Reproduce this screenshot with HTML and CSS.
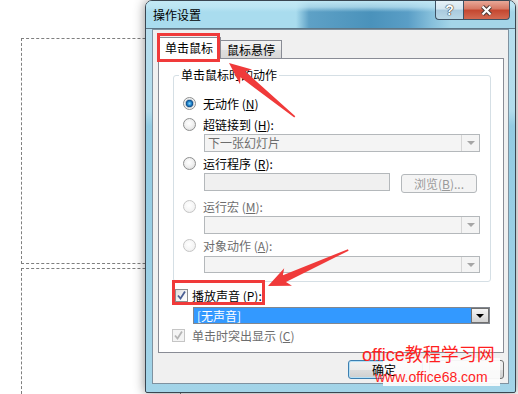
FILE: index.html
```html
<!DOCTYPE html>
<html lang="zh-CN">
<head>
    <meta charset="UTF-8">
    <meta name="viewport" content="width=device-width, initial-scale=1.0">
    <title>操作设置</title>
    <link rel="stylesheet" href="styles.css">
</head>
<body>
    <div class="slide slide-top"></div>
    <div class="slide slide-bottom"></div>

    <div class="window">
        <div class="titlebar">
            <span class="title">操作设置</span>
            <div class="caption">
                <div class="cap-btn cap-help">?</div>
                <div class="cap-btn cap-close">
                    <svg width="13" height="11" viewBox="0 0 13 11">
                        <path d="M2.5 1.5 L10.5 9.5 M10.5 1.5 L2.5 9.5" stroke="#4a3a36" stroke-width="4.2" fill="none"/>
                        <path d="M2.5 1.5 L10.5 9.5 M10.5 1.5 L2.5 9.5" stroke="#fff" stroke-width="2.2" fill="none"/>
                    </svg>
                </div>
            </div>
        </div>

        <div class="client">
            <div class="tabs">
                <div class="tab tab-active">单击鼠标</div>
                <div class="tab">鼠标悬停</div>
            </div>
            <div class="panel">
                <fieldset class="group">
                    <legend>单击鼠标时的动作</legend>
                    <div class="opt"><span class="radio radio-on"></span>无动作 (<u>N</u>)</div>
                    <div class="opt gap1"><span class="radio"></span>超链接到 (<u>H</u>):</div>
                    <div class="combo"><span class="combo-text">下一张幻灯片</span><span class="combo-btn"></span></div>
                    <div class="opt gap1"><span class="radio"></span>运行程序 (<u>R</u>):</div>
                    <div class="field-row">
                        <div class="textbox"></div>
                        <div class="btn btn-off">浏览(<u>B</u>)...</div>
                    </div>
                    <div class="opt opt-off gap4"><span class="radio radio-off"></span>运行宏 (<u>M</u>):</div>
                    <div class="combo"><span class="combo-text"></span><span class="combo-btn"></span></div>
                    <div class="opt opt-off gap1"><span class="radio radio-off"></span>对象动作 (<u>A</u>):</div>
                    <div class="combo combo-last"><span class="combo-text"></span><span class="combo-btn"></span></div>
                </fieldset>

                <div class="check-row sound-row">
                    <span class="check">
                        <svg width="11" height="11" viewBox="0 0 11 11"><path d="M2 5.5 L4.5 8.5 L9 1.5" stroke="#4b5f93" stroke-width="1.8" fill="none"/></svg>
                    </span>
                    播放声音 (<u>P</u>):
                </div>
                <div class="combo combo-sound"><span class="combo-text">[无声音]</span><span class="combo-btn"></span></div>
                <div class="check-row check-row-off">
                    <span class="check check-off">
                        <svg width="11" height="11" viewBox="0 0 11 11"><path d="M2 5.5 L4.5 8.5 L9 1.5" stroke="#b5b5b5" stroke-width="1.8" fill="none"/></svg>
                    </span>
                    单击时突出显示 (<u>C</u>)
                </div>
            </div>
            <div class="actions">
                <div class="btn btn-default"><span class="btn-label">确定</span></div>
                <div class="btn"></div>
            </div>
        </div>
    </div>

    <!-- annotations drawn over the screenshot -->
    <div class="mark mark-tab"></div>
    <div class="mark mark-sound"></div>
    <svg class="arrows" width="518" height="394" viewBox="0 0 518 394">
        <polygon transform="translate(229 63) rotate(219.3)" points="-85,-0.8 -18,-3.8 -22,-9.5 0,0 -22,9.5 -18,3.8 -85,0.8" fill="#f03a3a"/>
        <polygon transform="translate(268 286) rotate(155.8)" points="-88,-0.8 -18,-3.8 -22,-9.5 0,0 -22,9.5 -18,3.8 -88,0.8" fill="#f03a3a"/>
    </svg>

    <div class="wm-backdrop"></div>
    <div class="wm wm-name">office教程学习网</div>
    <div class="wm wm-url">www.office68.com</div>
</body>
</html>
```

FILE: styles.css
```css
* {
    box-sizing: border-box;
}

body {
    margin: 0;
    width: 518px;
    height: 394px;
    overflow: hidden;
    position: relative;
    background: #fff;
    font-family: "Noto Sans CJK SC", "Liberation Sans", sans-serif;
    font-size: 12px;
    color: #000;
}

u {
    text-decoration-thickness: 1px;
    text-underline-offset: 1px;
}

/* slide placeholders behind the dialog */
.slide {
    position: absolute;
    left: 21px;
    width: 160px;
    border: 1px dashed #7f7f7f;
}
.slide-top {
    top: 38px;
    height: 226px;
}
.slide-bottom {
    top: 268px;
    height: 126px;
    border-bottom: none;
}

/* dialog window */
.window {
    position: absolute;
    left: 145px;
    top: 0;
    width: 371px;
    height: 393px;
    display: flex;
    flex-direction: column;
    border: 1px solid #3a4651;
    border-radius: 7px 7px 2px 2px;
    background: linear-gradient(to bottom, #b9dfee 0, #b2dcec 110px, #93cbe2 125px, #a3d4e8 100%);
    box-shadow: 0 0 12px rgba(0, 0, 0, 0.45);
}

.titlebar {
    height: 28px;
    display: flex;
    align-items: flex-start;
    padding-left: 7px;
    border-radius: 6px 6px 0 0;
    background:
        linear-gradient(to bottom, rgba(196, 233, 245, 0.95) 0, rgba(196, 233, 245, 0.7) 6px, rgba(196, 233, 245, 0) 11px),
        linear-gradient(to right, #a9dcee 0, #a9dcee 150px, #5ea1c6 163px, #4a92bb 225px, #5a9ec6 262px, #85bfdb 285px, #a4d5e8 305px);
    border-bottom: 1px solid #5d7585;
}

.title {
    flex: 1;
    line-height: 27px;
}

.caption {
    display: flex;
    margin-right: 5px;
}

.cap-btn {
    height: 19px;
    display: flex;
    align-items: center;
    justify-content: center;
    border: 1px solid #3e5264;
    border-top: none;
}

.cap-help {
    width: 28px;
    border-right: none;
    border-radius: 0 0 0 4px;
    background: linear-gradient(to bottom, #e6f2f8 0, #d3e6f0 45%, #a9cade 50%, #b9d8e7 100%);
    font-family: "Liberation Sans", sans-serif;
    font-weight: bold;
    font-size: 14px;
    color: #fff;
    text-shadow: 0 0 1px #333, 0 0 1px #333, 0 0 1px #333;
}

.cap-close {
    width: 47px;
    border-radius: 0 0 4px 0;
    background: linear-gradient(to bottom, #e8a898 0, #d67762 45%, #c4462f 50%, #d36a52 100%);
}

.client {
    flex: 1;
    margin: 0 6px 8px 6px;
    padding: 7px 4px 0 4px;
    display: flex;
    flex-direction: column;
    border: 1px solid #7f92a0;
    background: #f0f0f0;
}

/* tabs */
.tabs {
    height: 21px;
    display: flex;
    align-items: flex-end;
}

.tab {
    width: 61px;
    height: 18px;
    text-align: center;
    line-height: 17px;
    border: 1px solid #898c95;
    border-bottom: none;
    border-left: none;
    background: linear-gradient(to bottom, #f3f3f3 0, #ebebeb 50%, #dfdfdf 51%, #d8d8d8 100%);
}

.tab-active {
    width: 64px;
    height: 22px;
    margin-bottom: -1px;
    position: relative;
    z-index: 1;
    border-left: 1px solid #898c95;
    background: #fff;
    line-height: 19px;
}

.panel {
    height: 295px;
    margin-left: 1px;
    border: 1px solid #898c95;
    background: #fff;
}

/* group box */
.group {
    margin: 8px 12px 0 14px;
    padding: 10px 10px 8px 9px;
    border: 1px solid #d5dfe5;
    border-radius: 3px;
    min-width: 0;
}

.group legend {
    padding: 0 2px;
    margin-left: -4px;
    line-height: 16px;
}

.opt {
    height: 20px;
    display: flex;
    align-items: center;
}
.gap1 {
    margin-top: 1px;
}
.gap4 {
    margin-top: 4px;
    height: 19px;
}
.opt-off {
    color: #6d6d6d;
}

.radio {
    width: 13px;
    height: 13px;
    flex: none;
    margin-right: 7px;
    border-radius: 50%;
    border: 1px solid #8e8f8f;
    background: radial-gradient(circle at 45% 40%, #ffffff 0, #f1f1f1 45%, #d4d4d4 100%);
}
.radio-on {
    background: radial-gradient(circle at 50% 50%, #8ad6f7 0, #2b90d6 1.8px, #0c4c8a 3.4px, #b9c4cc 4px, #f4f4f4 5px, #dcdcdc 100%);
}
.radio-off {
    border-color: #c5c5c5;
    background: radial-gradient(circle at 45% 40%, #ffffff 0, #f4f4f4 60%, #e6e6e6 100%);
}

/* drop-down boxes */
.combo {
    height: 18px;
    margin-left: 21px;
    display: flex;
    border: 1px solid #b4b8bb;
    background: #f4f4f4;
    color: #6d6d6d;
}
.combo-last {
    height: 17px;
    margin-top: 1px;
}

.combo-text {
    flex: 1;
    padding-left: 3px;
    line-height: 16px;
    white-space: nowrap;
}

.combo-btn {
    width: 18px;
    display: flex;
    align-items: center;
    justify-content: center;
    border-left: 1px solid #d6d6d6;
}
.combo-btn::after {
    content: "";
    border-left: 4px solid transparent;
    border-right: 4px solid transparent;
    border-top: 4px solid #a6a6a6;
}

.field-row {
    height: 20px;
    display: flex;
    align-items: flex-start;
    margin-left: 21px;
}

.textbox {
    width: 186px;
    height: 18px;
    border: 1px solid #b4b8bb;
    background: #f0f0f0;
}

.btn {
    width: 75px;
    height: 19px;
    display: flex;
    align-items: center;
    justify-content: center;
    border: 1px solid #707070;
    border-radius: 3px;
    background: linear-gradient(to bottom, #f2f2f2 0, #ebebeb 50%, #dddddd 51%, #cfcfcf 100%);
}

.btn-off {
    width: 76px;
    margin: 1px 0 0 11px;
    border-color: #b4b8bb;
    background: #f4f4f4;
    color: #9a9a9a;
}

/* checkboxes below the group */
.check-row {
    height: 20px;
    display: flex;
    align-items: center;
    margin-left: 16px;
}
.sound-row {
    margin-top: 3px;
}
.check-row-off {
    height: 18px;
    margin: 2px 0 0 13px;
    color: #6d6d6d;
}

.check {
    width: 13px;
    height: 13px;
    flex: none;
    margin-right: 4px;
    display: flex;
    align-items: center;
    justify-content: center;
    border: 1px solid #8e8f8f;
    background: linear-gradient(135deg, #dcdcdc 0, #f6f6f6 60%, #ffffff 100%);
}
.check-off {
    margin-right: 7px;
    border-color: #c5c5c5;
    background: #f4f4f4;
}

.combo-sound {
    width: 297px;
    height: 17px;
    margin: 2px 0 0 34px;
    border-color: #82878f;
    background: #fff;
    color: #fff;
}
.combo-sound .combo-text {
    background: #3399ff;
    line-height: 15px;
}
.combo-sound .combo-btn {
    border: 1px solid #6f6f6f;
    background: linear-gradient(to bottom, #f4f4f4 0, #e4e4e4 50%, #d2d2d2 100%);
}
.combo-sound .combo-btn::after {
    border-top-color: #000;
}

.actions {
    display: flex;
    justify-content: flex-end;
    gap: 6px;
    margin-top: 7px;
}

.btn-default {
    border-color: #3c7fb1;
    box-shadow: inset 0 0 0 1px #b6e0f6;
}

/* the label stays above the watermark's light backdrop */
.btn-label {
    position: relative;
    z-index: 2;
    margin-left: -3px;
}

/* red annotations */
.mark {
    position: absolute;
    z-index: 3;
    border: 3px solid #f03a3a;
}
.mark-tab {
    left: 157px;
    top: 33px;
    width: 63px;
    height: 29px;
}
.mark-sound {
    left: 172px;
    top: 280px;
    width: 93px;
    height: 25px;
}

.arrows {
    position: absolute;
    z-index: 3;
    left: 0;
    top: 0;
    pointer-events: none;
}

/* site watermark */
.wm-backdrop {
    position: absolute;
    z-index: 1;
    left: 383px;
    top: 358px;
    width: 117px;
    height: 28px;
    background: rgba(252, 252, 252, 0.95);
}

.wm {
    position: absolute;
    z-index: 3;
    font-family: "Liberation Sans", "Noto Sans CJK SC", sans-serif;
    color: #ff1f1f;
    white-space: nowrap;
}
.wm-name {
    left: 362px;
    top: 345px;
    font-size: 18px;
    line-height: 20px;
}
.wm-url {
    left: 375px;
    top: 369px;
    font-size: 14px;
    line-height: 16px;
}
```
